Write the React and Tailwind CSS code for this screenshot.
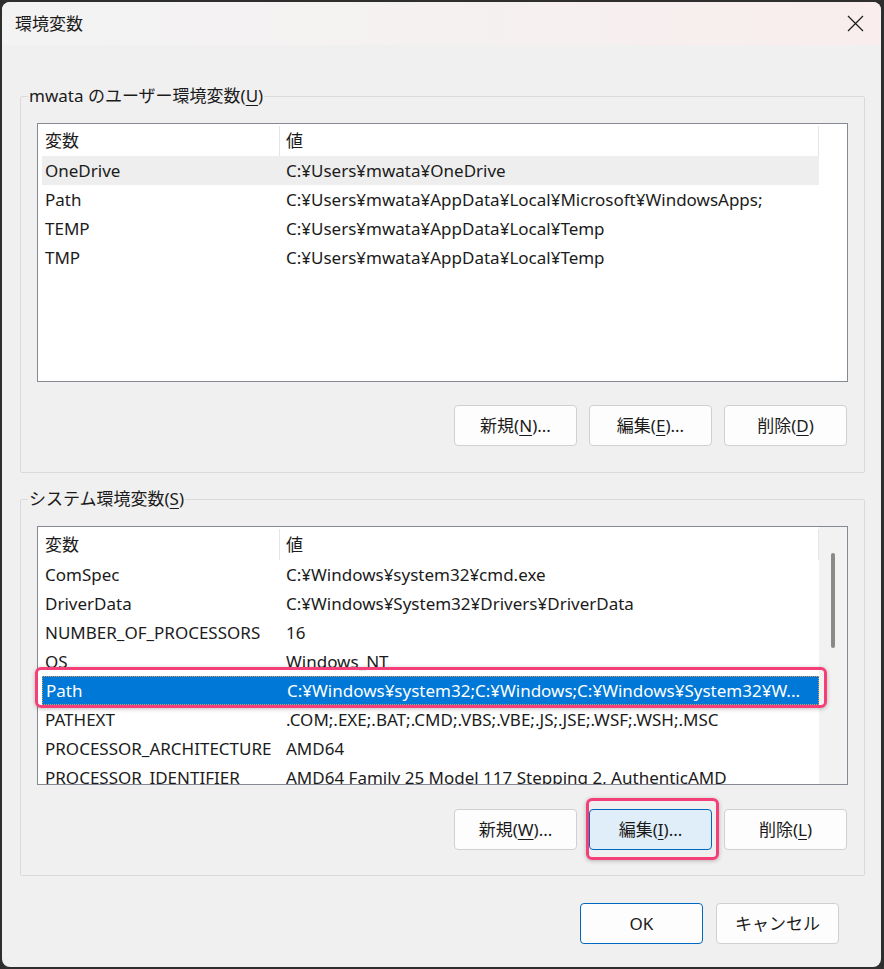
import React from "react";

const FONT = "font-['Noto_Sans','Noto_Sans_CJK_JP',sans-serif]";

const userRows = [
  ["OneDrive", "C:¥Users¥mwata¥OneDrive"],
  ["Path", "C:¥Users¥mwata¥AppData¥Local¥Microsoft¥WindowsApps;"],
  ["TEMP", "C:¥Users¥mwata¥AppData¥Local¥Temp"],
  ["TMP", "C:¥Users¥mwata¥AppData¥Local¥Temp"],
];

const systemRows = [
  ["ComSpec", "C:¥Windows¥system32¥cmd.exe"],
  ["DriverData", "C:¥Windows¥System32¥Drivers¥DriverData"],
  ["NUMBER_OF_PROCESSORS", "16"],
  ["OS", "Windows_NT"],
  ["Path", "C:¥Windows¥system32;C:¥Windows;C:¥Windows¥System32¥W..."],
  ["PATHEXT", ".COM;.EXE;.BAT;.CMD;.VBS;.VBE;.JS;.JSE;.WSF;.WSH;.MSC"],
  ["PROCESSOR_ARCHITECTURE", "AMD64"],
  ["PROCESSOR_IDENTIFIER", "AMD64 Family 25 Model 117 Stepping 2, AuthenticAMD"],
];

function Key({ children }) {
  return <span className="underline decoration-1 underline-offset-[3px]">{children}</span>;
}

function Btn({ children, active, primary, className = "" }) {
  const tone = active
    ? "border-[#0067c0] bg-[#e0eef9]"
    : primary
    ? "border-[#0067c0] bg-[#fdfdfd]"
    : "border-[#d0d0d0] bg-[#fdfdfd]";
  return (
    <button
      type="button"
      className={`flex h-[41px] w-[123px] items-center justify-center rounded-[4px] border pt-[1px] text-[17px] text-[#1b1b1b] ${tone} ${className}`}
    >
      {children}
    </button>
  );
}

function VarList({ rows, selected, hover, scrollbar, headerH = "h-[32px]" }) {
  return (
    <div className="h-[259px] w-full overflow-hidden border border-[#858991] bg-white">
      <div className="flex h-full">
        <div className="ml-[4px] w-[777px] shrink-0">
          <div className={`flex ${headerH} items-center pt-[2px] text-[17px]`}>
            <div className="flex h-full w-[238px] items-center border-r border-[#e5e5e5] pl-[3px]">変数</div>
            <div className="flex h-full flex-1 items-center border-r border-[#e5e5e5] pl-[6px]">値</div>
          </div>
          {rows.map(([name, value], i) => {
            const sel = i === selected;
            const hov = i === hover;
            return (
              <div
                key={name}
                className={`flex h-[29px] items-center whitespace-nowrap pt-[1px] text-[17px] ${
                  sel
                    ? "border border-dotted border-[#d89a56] bg-[#0078d7] text-white"
                    : hov
                    ? "bg-[#eeeeee]"
                    : ""
                }`}
              >
                <div className="w-[244px] shrink-0 overflow-hidden pl-[3px]">{name}</div>
                <div className="flex-1 overflow-hidden">{value}</div>
              </div>
            );
          })}
        </div>
        {scrollbar && (
          <div className="flex flex-1 justify-center bg-[#f2f2f2] pt-[26px]">
            <div className="h-[95px] w-[4px] rounded-full bg-[#8a8a8a]" />
          </div>
        )}
      </div>
    </div>
  );
}

export default function App() {
  return (
    <div className={`h-[969px] w-[884px] bg-[#2e2e2e] pl-[2px] pt-[2px] ${FONT} text-[#1b1b1b]`}>
      <div className="flex h-[965px] w-[879px] flex-col overflow-hidden rounded-[8px] bg-[#f0f0f0]">
        <div className="flex h-[43px] shrink-0 items-center justify-between bg-gradient-to-r from-[#f3f3f3] via-[#f5f1f1] to-[#f9eded] pl-[13px] pr-[16px]">
          <span className="text-[17px]">環境変数</span>
          <svg width="17" height="17" viewBox="0 0 17 17" className="mr-[1px]">
            <path d="M1 1 L16 16 M16 1 L1 16" stroke="#1b1b1b" strokeWidth="1.2" fill="none" />
          </svg>
        </div>

        <fieldset className="ml-[18px] mr-[16px] mt-[40px] rounded-[2px] border border-[#dadada] px-4 pb-[26px] pt-[16px]">
          <legend className="ml-[-9px] px-[1px] text-[17px] leading-[22px]">
            mwata のユーザー環境変数(<Key>U</Key>)
          </legend>
          <VarList rows={userRows} hover={0} />
          <div className="mt-[23px] flex justify-end gap-[12px] pr-[1px]">
            <Btn>新規(<Key>N</Key>)...</Btn>
            <Btn>編集(<Key>E</Key>)...</Btn>
            <Btn>削除(<Key>D</Key>)</Btn>
          </div>
        </fieldset>

        <fieldset className="ml-[18px] mr-[16px] mt-[15px] rounded-[2px] border border-[#dadada] px-4 pb-[25px] pt-[16px]">
          <legend className="ml-[-9px] px-[1px] text-[17px] leading-[22px]">
            システム環境変数(<Key>S</Key>)
          </legend>
          <div className="relative">
            <VarList rows={systemRows} selected={4} scrollbar headerH="h-[33px]" />
            <div className="pointer-events-none absolute left-[-2px] top-[141px] h-[41px] w-[792px] rounded-[6px] border-[3px] border-[#f43f78] shadow-[0_1px_4px_rgba(0,0,0,0.25)]" />
          </div>
          <div className="mt-[24px] flex justify-end gap-[12px] pr-[1px]">
            <Btn>新規(<Key>W</Key>)...</Btn>
            <div className="relative">
              <Btn active>編集(<Key>I</Key>)...</Btn>
              <div className="pointer-events-none absolute left-[-3px] top-[-11px] h-[62px] w-[133px] rounded-[6px] border-[3px] border-[#f43f78] shadow-[0_1px_4px_rgba(0,0,0,0.25)]" />
            </div>
            <Btn>削除(<Key>L</Key>)</Btn>
          </div>
        </fieldset>

        <div className="mt-[27px] flex justify-end gap-[13px] pr-[42px]">
          <Btn primary className="w-[123px]">OK</Btn>
          <Btn className="w-[122px]">キャンセル</Btn>
        </div>
      </div>
    </div>
  );
}
